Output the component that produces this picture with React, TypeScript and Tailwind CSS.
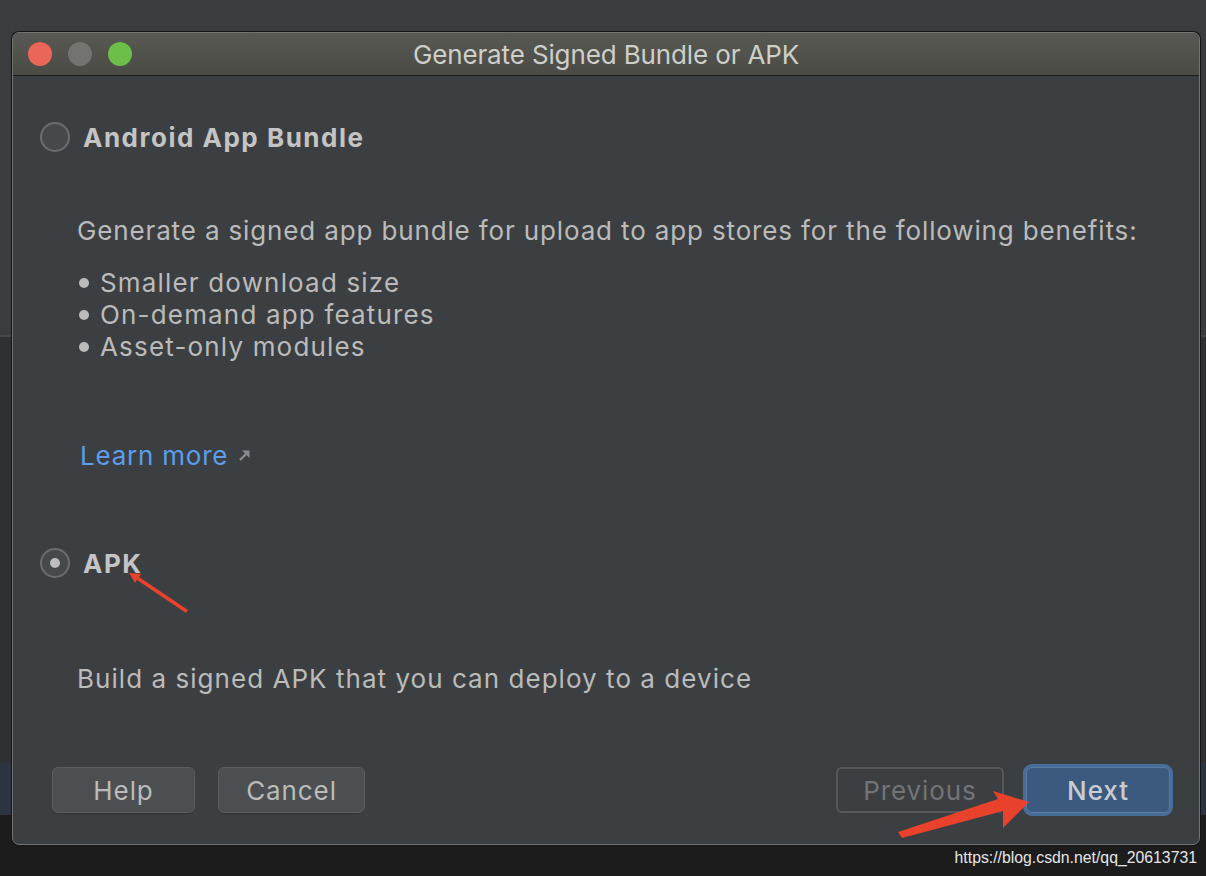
import React from "react";

function Radio({ selected }: { selected?: boolean }) {
  return (
    <div className="w-[30px] h-[30px] rounded-full border-[2px] border-[#6b6d6f] bg-[#45494a] flex items-center justify-center shrink-0">
      {selected && <div className="w-[10px] h-[10px] rounded-full bg-[#bdbdbd]" />}
    </div>
  );
}

function Bullet({ children }: { children: React.ReactNode }) {
  return (
    <div className="flex items-center h-[32px]">
      <div className="w-[10px] h-[10px] rounded-full bg-[#bbbbbb] ml-[2px] mr-[11px]" />
      <span>{children}</span>
    </div>
  );
}

export default function App() {
  return (
    <div
      className="relative w-[1206px] h-[876px] overflow-hidden"
      style={{ fontFamily: "Inter, 'Noto Sans', sans-serif" }}
    >
      {/* backdrop window */}
      <div className="flex flex-col w-full h-full">
        <div className="h-[335px] bg-[#3a3c3e]" />
        <div className="h-[2px] bg-[#454749]" />
        <div className="h-[426px] bg-[#2e3032]" />
        <div className="h-[52px] bg-[#2c3442]" />
        <div className="flex-1 bg-[#1c1c1c]" />
      </div>

      {/* dialog */}
      <div className="absolute left-[12px] top-[32px] w-[1188px] h-[813px] rounded-[7px] border border-[#737373] shadow-[0_0_0_1px_#151515] bg-[#3c3f41] flex flex-col overflow-hidden">
        <div className="relative h-[43px] shrink-0 bg-gradient-to-b from-[#585953] to-[#4a4b45] border-b border-[#1b1b1b] flex items-center justify-center">
          <div className="absolute left-[15px] top-[9px] flex gap-[16px]">
            <div className="w-[24px] h-[24px] rounded-full bg-[#ec6559]" />
            <div className="w-[24px] h-[24px] rounded-full bg-[#737370]" />
            <div className="w-[24px] h-[24px] rounded-full bg-[#6cbf48]" />
          </div>
          <span className="text-[26px] text-[#cfcfca] tracking-[-0.005em]">Generate Signed Bundle or APK</span>
        </div>

        <div className="flex flex-col flex-1 text-[#bbbbbb] text-[26px] tracking-[0.035em]">
          <div className="flex items-center h-[34px] mt-[44px] pl-[27px]">
            <Radio />
            <span className="ml-[13px] font-bold tracking-[0.058em] text-[#c4c4c4]">Android App Bundle</span>
          </div>

          <div className="pl-[64px] mt-[61px] h-[32px] leading-[32px] tracking-[0.033em]">
            Generate a signed app bundle for upload to app stores for the following benefits:
          </div>

          <div className="pl-[64px] mt-[20px] flex flex-col leading-[32px] tracking-[0.045em]">
            <Bullet>Smaller download size</Bullet>
            <Bullet>On-demand app features</Bullet>
            <Bullet>Asset-only modules</Bullet>
          </div>

          <div className="pl-[67px] mt-[76px] h-[32px] flex items-center tracking-[0.03em]">
            <span className="text-[#5c9ded]">Learn more</span>
            <svg className="ml-[10px]" width="14" height="14" viewBox="0 0 14 14">
              <path d="M2 12 L10 4" stroke="#8a8c8e" strokeWidth="2.4" fill="none" />
              <path d="M4 2.5 H11.5 V10 Z" fill="#8a8c8e" />
            </svg>
          </div>

          <div className="flex items-center h-[34px] mt-[75px] pl-[27px]">
            <Radio selected />
            <span className="ml-[13px] font-bold tracking-[0.058em] text-[#c4c4c4]">APK</span>
          </div>

          <div className="pl-[64px] mt-[83px] h-[32px] leading-[32px] tracking-[0.04em]">
            Build a signed APK that you can deploy to a device
          </div>

          <div className="mt-[69px] flex items-center pl-[39px] pr-[26px]">
            <button className="w-[143px] h-[46px] rounded-[6px] bg-[#4b4f51] border border-[#5b5e60] shadow-[0_1px_0_#323436] text-[#bbbbbb]">
              Help
            </button>
            <button className="ml-[23px] w-[147px] h-[46px] rounded-[6px] bg-[#4b4f51] border border-[#5b5e60] shadow-[0_1px_0_#323436] text-[#bbbbbb]">
              Cancel
            </button>
            <div className="flex-1" />
            <button className="w-[168px] h-[46px] rounded-[6px] border-[2px] border-[#56595b] text-[#727476]">
              Previous
            </button>
            <button className="ml-[19px] w-[150px] h-[52px] rounded-[9px] bg-[#476e98] p-[3px]">
              <div className="w-full h-full rounded-[6px] bg-[#3c5a80] border border-[#5a7aa0] flex items-center justify-center text-[#c9cdd2] font-medium">
                Next
              </div>
            </button>
          </div>
        </div>
      </div>

      {/* annotation arrows */}
      <svg className="absolute left-0 top-0 pointer-events-none" width="1206" height="876" viewBox="0 0 1206 876">
        <polygon points="186,613 188,610 139,577 141,574 129,573 135,583 137,580" fill="#e8412c" />
        <polygon points="898,832 902,838 1003,811 1003,828 1029,802 993,791 998,799" fill="#e8412c" />
      </svg>

      {/* watermark */}
      <div
        className="absolute right-[9px] top-[846px] text-[15.8px] text-[#e6e6e6]"
        style={{ fontFamily: "'Liberation Sans', Arial, sans-serif" }}
      >
        https://blog.csdn.net/qq_20613731
      </div>
    </div>
  );
}
